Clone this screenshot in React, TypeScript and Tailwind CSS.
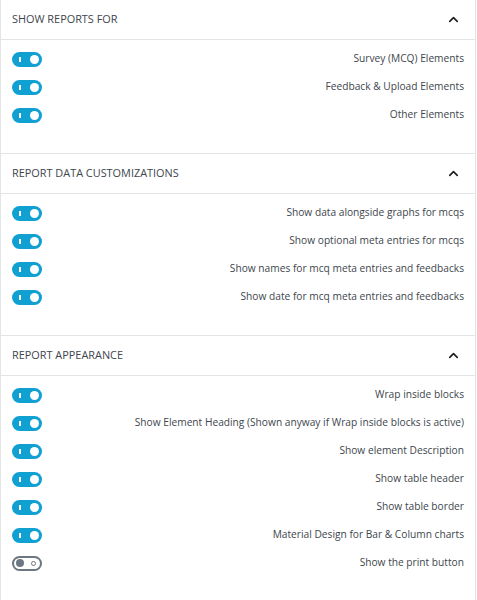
import { ChevronUp } from "lucide-react";

interface Option {
  label: string;
  on: boolean;
}

interface PanelProps {
  title: string;
  options: Option[];
}

function Toggle({ on }: { on: boolean }) {
  if (on) {
    return (
      <span className="flex items-center justify-between w-[30px] h-[15px] rounded-full bg-[#11a0d2] pl-[7px] pr-[3px] shrink-0">
        <span className="w-[2px] h-[5px] bg-white" />
        <span className="w-[9px] h-[9px] rounded-full bg-white" />
      </span>
    );
  }
  return (
    <span className="flex items-center justify-between w-[30px] h-[15px] rounded-full border-2 border-[#6c7781] bg-white pl-[2px] pr-[4px] shrink-0">
      <span className="w-[8px] h-[8px] rounded-full bg-[#6c7781]" />
      <span className="w-[5px] h-[5px] rounded-full border border-[#6c7781]" />
    </span>
  );
}

function Panel({ title, options }: PanelProps) {
  return (
    <div className="border-b border-[#e2e4e7]">
      {/* Header */}
      <div className="h-[40px] flex items-center justify-between pl-[11px] pr-[14px] border-b border-[#e2e4e7]">
        <span className="text-[10.9px] text-[#40464d] uppercase">{title}</span>
        <ChevronUp size={15} strokeWidth={2.6} className="text-[#1e1e1e]" />
      </div>
      {/* Body */}
      <div className="pt-[5px] pb-[24px]">
        {options.map((opt, i) => (
          <div
            key={i}
            className="h-[28px] flex items-center justify-between pl-[11px] pr-[11px]"
          >
            <Toggle on={opt.on} />
            <span className="text-[10.2px] text-[#40464d] text-right">
              {opt.label}
            </span>
          </div>
        ))}
      </div>
    </div>
  );
}

export default function App() {
  const panels: PanelProps[] = [
    {
      title: "Show Reports For",
      options: [
        { label: "Survey (MCQ) Elements", on: true },
        { label: "Feedback & Upload Elements", on: true },
        { label: "Other Elements", on: true },
      ],
    },
    {
      title: "Report Data Customizations",
      options: [
        { label: "Show data alongside graphs for mcqs", on: true },
        { label: "Show optional meta entries for mcqs", on: true },
        { label: "Show names for mcq meta entries and feedbacks", on: true },
        { label: "Show date for mcq meta entries and feedbacks", on: true },
      ],
    },
    {
      title: "Report Appearance",
      options: [
        { label: "Wrap inside blocks", on: true },
        {
          label: "Show Element Heading (Shown anyway if Wrap inside blocks is active)",
          on: true,
        },
        { label: "Show element Description", on: true },
        { label: "Show table header", on: true },
        { label: "Show table border", on: true },
        { label: "Material Design for Bar & Column charts", on: true },
        { label: "Show the print button", on: false },
      ],
    },
  ];

  return (
    <div
      className="w-[476px] h-[600px] overflow-hidden bg-white border-x border-[#e2e4e7]"
      style={{ fontFamily: '"Open Sans", "Noto Sans", sans-serif' }}
    >
      {panels.map((p, i) => (
        <Panel key={i} title={p.title} options={p.options} />
      ))}
    </div>
  );
}
